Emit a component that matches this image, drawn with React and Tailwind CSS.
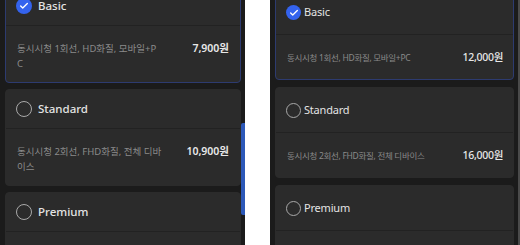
import { Check } from 'lucide-react';

const PLANOS = [
  { nome: 'Basic', desc: '동시시청 1회선, HD화질, 모바일+PC', linhas: ['동시시청 1회선, HD화질, 모바일+P', 'C'], precoA: '7,900원', precoB: '12,000원', selecionado: true },
  { nome: 'Standard', desc: '동시시청 2회선, FHD화질, 전체 디바이스', linhas: ['동시시청 2회선, FHD화질, 전체 디바', '이스'], precoA: '10,900원', precoB: '16,000원' },
  { nome: 'Premium', desc: '동시시청 4회선, UHD화질, 전체 디바이스', linhas: ['동시시청 4회선, UHD화질, 전체 디바', '이스'], precoA: '13,900원', precoB: '19,000원' },
];

function Marcador({ ativo, tamanho }) {
  if (ativo) {
    return (
      <span className={`${tamanho} rounded-full bg-[#3463ee] flex items-center justify-center shrink-0`}>
        <Check size={10} strokeWidth={3.2} className="text-white" />
      </span>
    );
  }
  return <span className={`${tamanho} rounded-full border-[1.5px] border-[#a9a9a9] shrink-0`} />;
}

// cartão da versão larga (esquerda)
function CartaoLargo({ plano }) {
  return (
    <div className={`rounded-[4px] border bg-[#2b2b2b] ${plano.selecionado ? 'border-[#2d3b70]' : 'border-[#2b2b2b]'}`}>
      <div className="h-[38px] flex items-center pl-[10px] gap-[6px]">
        <Marcador ativo={plano.selecionado} tamanho="w-[16px] h-[16px]" />
        <span className="text-[11.5px] font-medium text-[#e4e4e4]">{plano.nome}</span>
      </div>
      <div className="h-px bg-[#222222]" />
      <div className="h-[56px] flex items-start justify-between pl-[11px] pr-[11px] pt-[15px]">
        <p className="text-[9.5px] leading-[15px] text-[#8a8a8a]">
          {plano.linhas.map(l => <span key={l} className="block whitespace-nowrap">{l}</span>)}
        </p>
        <span className="text-[10.5px] leading-[15px] font-semibold text-[#e8e8e8]">{plano.precoA}</span>
      </div>
    </div>
  );
}

// cartão da versão estreita (direita)
function CartaoEstreito({ plano }) {
  return (
    <div className={`rounded-[4px] border bg-[#2b2b2b] ${plano.selecionado ? 'border-[#2d3b70]' : 'border-[#2b2b2b]'}`}>
      <div className="h-[44px] flex items-center pl-[10px] gap-[3px] pt-[1px]">
        <Marcador ativo={plano.selecionado} tamanho="w-[15px] h-[15px]" />
        <span className="text-[11px] text-[#e4e4e4] tracking-[-0.2px]">{plano.nome}</span>
      </div>
      <div className="h-px bg-[#222222]" />
      <div className="h-[44px] flex items-center justify-between pl-[11px] pr-[10px] pt-[2px]">
        <p className="text-[8.5px] text-[#8a8a8a] tracking-[-0.3px]">{plano.desc}</p>
        <span className="text-[10.5px] font-medium text-[#e8e8e8] tracking-[-0.3px]">{plano.precoB}</span>
      </div>
    </div>
  );
}

export default function App() {
  return (
    <div className="w-[520px] h-[245px] flex overflow-hidden bg-white font-['Noto_Sans','Noto_Sans_CJK_KR',sans-serif]">
      <div className="relative w-[245px] h-full bg-[#1b1b1b] overflow-hidden">
        <div className="w-[236px] ml-[5px] mt-[-14px] flex flex-col gap-[6px]">
          {PLANOS.map(p => <CartaoLargo key={p.nome} plano={p} />)}
        </div>
        <div className="absolute right-0 top-[123px] w-[4px] h-[92px] rounded-l-[2px] bg-[#2c58b8]" />
      </div>
      <div className="w-[25px] h-full bg-white" />
      <div className="flex-1 h-full bg-[#1b1b1b] overflow-hidden flex">
        <div className="w-[239px] ml-[5px] mt-[-11px] flex flex-col gap-[7px]">
          {PLANOS.map(p => <CartaoEstreito key={p.nome} plano={p} />)}
        </div>
        <div className="ml-auto w-[2px] h-full bg-[#4a4a4a]" />
      </div>
    </div>
  );
}
